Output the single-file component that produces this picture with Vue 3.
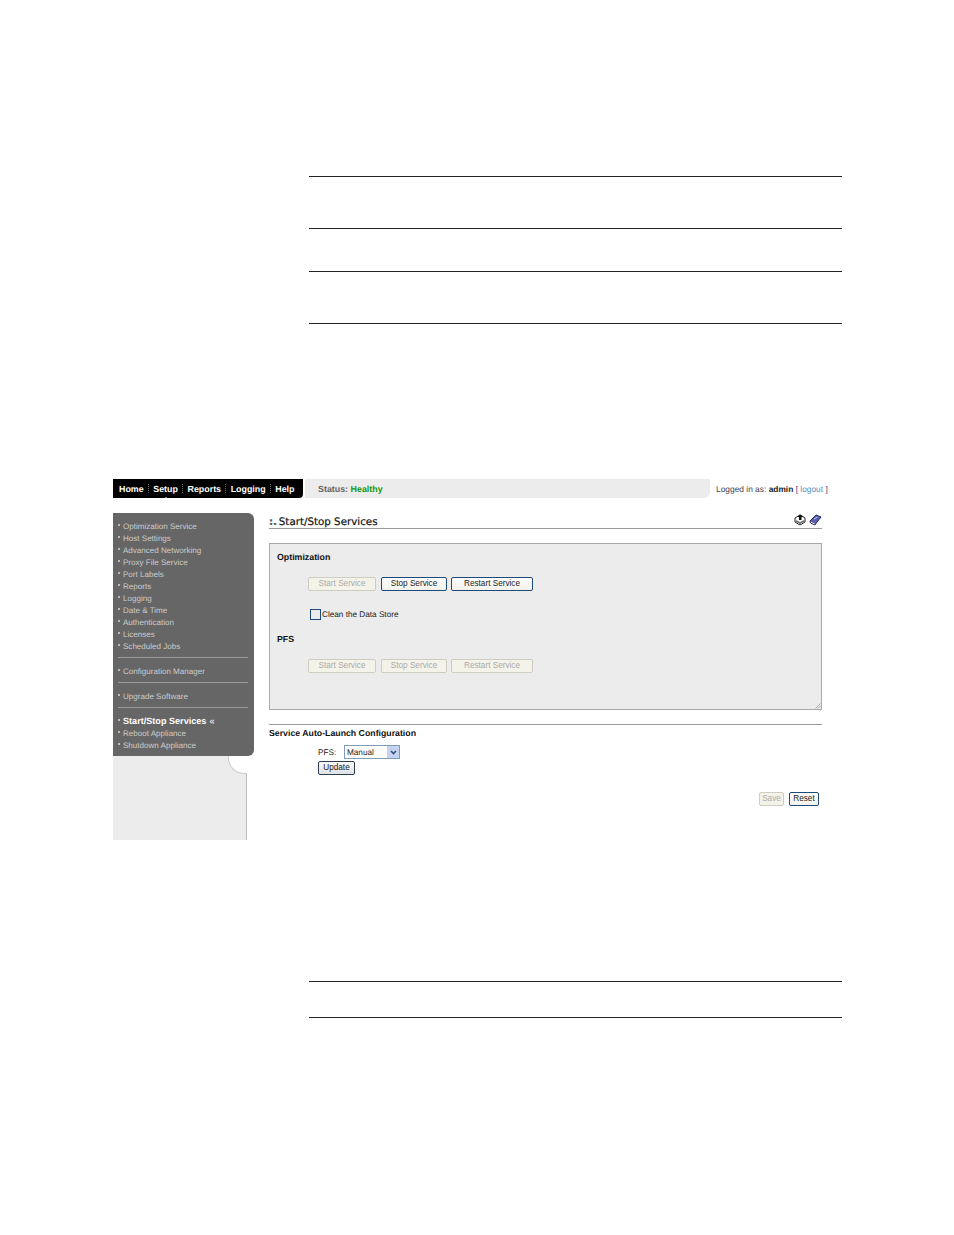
<template>
  <div class="page">
    <div class="rules rules-top">
      <hr class="gap-52" />
      <hr class="gap-43" />
      <hr class="gap-52" />
      <hr />
    </div>

    <div class="shot">
      <div class="topbar">
        <nav class="nav">
          <template v-for="(item, i) in navItems" :key="item">
            <span v-if="i" class="nav-sep"></span>
            <a class="nav-item" :class="{ current: item === 'Setup' }">{{ item }}</a>
          </template>
        </nav>
        <div class="status">Status: <b>Healthy</b></div>
        <div class="login">Logged in as: <b>admin</b> <i>[</i> <a>logout</a> <i>]</i></div>
      </div>

      <div class="body">
        <aside class="side">
          <div class="menu">
            <template v-for="(group, g) in menuGroups" :key="g">
              <div v-if="g" class="menu-line"></div>
              <ul>
                <li v-for="m in group" :key="m" :class="{ active: m === 'Start/Stop Services' }">
                  <span class="dot"></span>{{ m }}<em v-if="m === 'Start/Stop Services'">«</em>
                </li>
              </ul>
            </template>
          </div>
          <div class="side-foot"><div class="notch"></div></div>
        </aside>

        <main class="content">
          <div class="title-row">
            <h1><span>:.</span> Start/Stop Services</h1>
            <div class="title-icons">
              <svg width="12" height="12" viewBox="0 0 12 12">
                <path d="M1 4 L6 1 L11 4 L11 8 L6 11 L1 8 Z" fill="#fff" stroke="#222" stroke-width="1" />
                <path d="M2 6 L6 8 L10 6 L10 8 L6 10 L2 8 Z" fill="#777" />
                <path d="M6 0.5 L9.5 2.5 L7.5 3 L7.5 6 L5 6 L5 3.2 L3.5 2.8 Z" fill="#111" />
              </svg>
              <svg width="13" height="12" viewBox="0 0 13 12">
                <path d="M1 7 L7 1 L12 3 L6.5 10 Z" fill="#5a5fb0" stroke="#23265e" stroke-width="1" />
                <path d="M1 7 L1.5 9 L6 11 L6.5 10" fill="#fff" stroke="#23265e" stroke-width="1" />
                <path d="M5 5 L8.5 3" stroke="#c5c8f0" stroke-width="1" />
              </svg>
            </div>
          </div>

          <section class="panel">
            <h2>Optimization</h2>
            <div class="btns">
              <button class="btn wide-a" disabled>Start Service</button>
              <button class="btn wide-b">Stop Service</button>
              <button class="btn wide-c">Restart Service</button>
            </div>
            <label class="check"><span class="box"></span>Clean the Data Store</label>
            <h2 class="pfs">PFS</h2>
            <div class="btns">
              <button class="btn wide-a" disabled>Start Service</button>
              <button class="btn wide-b" disabled>Stop Service</button>
              <button class="btn wide-c" disabled>Restart Service</button>
            </div>
            <svg class="grip" width="6" height="6" viewBox="0 0 6 6">
              <path d="M0.5 5.5 L5.5 0.5 M3 5.5 L5.5 3" stroke="#aaa" stroke-width="1" fill="none" />
            </svg>
          </section>

          <section class="auto">
            <h3>Service Auto-Launch Configuration</h3>
            <div class="auto-form">
              <div class="field">
                <span class="field-label">PFS:</span>
                <div class="select">
                  <span>Manual</span>
                  <span class="arrow">
                    <svg width="7" height="5" viewBox="0 0 7 5"><path d="M1 1 L3.5 3.5 L6 1" stroke="#3a4d7c" stroke-width="1.6" fill="none" /></svg>
                  </span>
                </div>
              </div>
              <button class="btn update">Update</button>
            </div>
          </section>

          <div class="actions">
            <button class="btn save" disabled>Save</button>
            <button class="btn reset">Reset</button>
          </div>
        </main>
      </div>
    </div>

    <div class="rules rules-bottom">
      <hr class="gap-36" />
      <hr />
    </div>
  </div>
</template>

<script setup>
const navItems = ['Home', 'Setup', 'Reports', 'Logging', 'Help']

const menuGroups = [
  [
    'Optimization Service',
    'Host Settings',
    'Advanced Networking',
    'Proxy File Service',
    'Port Labels',
    'Reports',
    'Logging',
    'Date & Time',
    'Authentication',
    'Licenses',
    'Scheduled Jobs'
  ],
  ['Configuration Manager'],
  ['Upgrade Software'],
  ['Start/Stop Services', 'Reboot Appliance', 'Shutdown Appliance']
]
</script>

<style>
html, body { margin: 0; background: #fff; }
</style>

<style scoped>
.page { width: 954px; height: 1235px; overflow: hidden; font-family: "Liberation Sans", "DejaVu Sans", sans-serif; font-size: 8.2px; color: #222; text-rendering: geometricPrecision; }

.rules { margin-left: 309px; width: 533px; }
.rules-top { padding-top: 176px; }
.rules-bottom { margin-top: 141px; }
hr { margin: 0; border: 0; height: 1px; background: #222; }
.gap-52 { margin-bottom: 51px; }
.gap-43 { margin-bottom: 42px; }
.gap-36 { margin-bottom: 35px; }

.shot { margin: 155px 0 0 113px; width: 717px; height: 361px; }

.topbar { display: flex; height: 19px; align-items: stretch; }
.nav { flex: none; width: 190px; box-sizing: border-box; padding-left: 6px; display: flex; align-items: center; background: #000; border-bottom-right-radius: 4px; }
.nav-item { position: relative; color: #fff; font-weight: bold; font-size: 8.9px; white-space: nowrap; }
.nav-sep { height: 9px; margin: 0 4.3px; border-left: 1px dotted #666; }
.current::after { content: ""; position: absolute; left: 50%; bottom: -6px; margin-left: -3px; border: 3px solid transparent; border-top: 0; border-bottom-color: #fff; }
.status { flex: none; width: 405px; margin-left: 2px; box-sizing: border-box; padding: 1px 0 0 13px; line-height: 18px; background: #ececec; border-bottom-right-radius: 6px; color: #666; font-weight: bold; font-size: 8.9px; }
.status b { color: #139a13; }
.login { margin-left: 6px; line-height: 20px; font-size: 8.4px; color: #445; white-space: nowrap; }
.login b { color: #222; }
.login a { color: #5a8fc0; }
.login i { font-style: normal; color: #5a3a6a; }

.body { display: flex; margin-top: 15px; }
.side { width: 141px; flex: none; }
.menu { box-sizing: border-box; height: 243px; padding: 7px 6px 0 5px; background: #666; border-radius: 0 6px 6px 0; color: #ccc; }
.menu ul { margin: 0; padding: 0; list-style: none; }
.menu li { height: 12px; line-height: 13.5px; font-size: 8.05px; white-space: nowrap; }
.menu li.active { color: #fff; font-weight: bold; font-size: 9.1px; line-height: 12px; }
.menu li em { margin-left: 3px; font-style: normal; font-weight: normal; }
.dot { display: inline-block; width: 2px; height: 2px; margin-right: 3px; vertical-align: 3px; background: #bbb; }
.menu-line { height: 1px; margin: 5px 0 7px 0; background: #999; }

.side-foot { position: relative; width: 134px; height: 84px; box-sizing: border-box; background: #ececec; border-right: 1px solid #bbb; }
.notch { position: absolute; top: 0; right: -1px; width: 18px; height: 17px; background: #fff; border-left: 1px solid #ccc; border-bottom: 1px solid #ccc; border-bottom-left-radius: 16px; }

.content { width: 553px; margin-left: 15px; }
.title-row { display: flex; justify-content: space-between; align-items: flex-end; height: 15px; border-bottom: 1px solid #999; }
h1 { margin: 0 0 -2px; font-family: "DejaVu Sans", sans-serif; font-size: 10.3px; line-height: 16px; font-weight: normal; color: #111; -webkit-text-stroke: 0.2px #111; }
h1 span { color: #666; font-weight: bold; margin-right: -1.5px; }
.title-icons { display: flex; gap: 3px; margin-bottom: 2px; }

.panel { position: relative; box-sizing: border-box; height: 167px; margin-top: 14px; padding: 7px 7px 0; background: #ececec; border: 1px solid #aaa; }
h2 { margin: 0; height: 12px; line-height: 12px; font-size: 8.8px; font-weight: bold; color: #111; }
h2.pfs { margin-top: 14px; }
.btns { display: flex; gap: 5px; margin: 14px 0 0 31px; }
.btn { box-sizing: border-box; height: 14px; padding: 0; font-family: inherit; font-size: 8.2px; line-height: 12px; color: #222; background: linear-gradient(#fff, #f3f1ea); border: 1px solid #1d4a78; border-radius: 2px; }
.btn:disabled { color: #aaa; background: #f4f3ea; border-color: #cfcdc0; }
.wide-a { width: 68px; }
.wide-b { width: 66px; margin-right: -1px; }
.wide-c { width: 82px; }
.check { display: flex; align-items: center; margin: 18px 0 0 33px; height: 10px; }
.box { box-sizing: border-box; width: 11px; height: 11px; margin-right: 1px; border: 1px solid #1d4a78; background: #ececec; }
.grip { position: absolute; right: 0; bottom: 0; }

.auto { margin-top: 14px; border-top: 1px solid #999; }
h3 { margin: 0; height: 16px; line-height: 17px; font-size: 8.75px; font-weight: bold; color: #111; }
.auto-form { margin: 4px 0 0 49px; }
.field { display: flex; align-items: center; height: 14px; }
.field-label { width: 26px; }
.select { box-sizing: border-box; display: flex; justify-content: space-between; align-items: center; width: 56px; height: 14px; padding-left: 2px; background: #fff; border: 1px solid #7f9db9; }
.arrow { display: flex; align-items: center; justify-content: center; width: 12px; height: 12px; background: #c3d3f0; }
.update { display: block; width: 37px; margin-top: 2px; background: linear-gradient(#f8f8f8, #dfe3e8); border-color: #2c3e50; }

.actions { display: flex; justify-content: flex-end; gap: 5px; margin: 17px 3px 0 0; }
.save { width: 25px; }
.reset { width: 30px; }
</style>
